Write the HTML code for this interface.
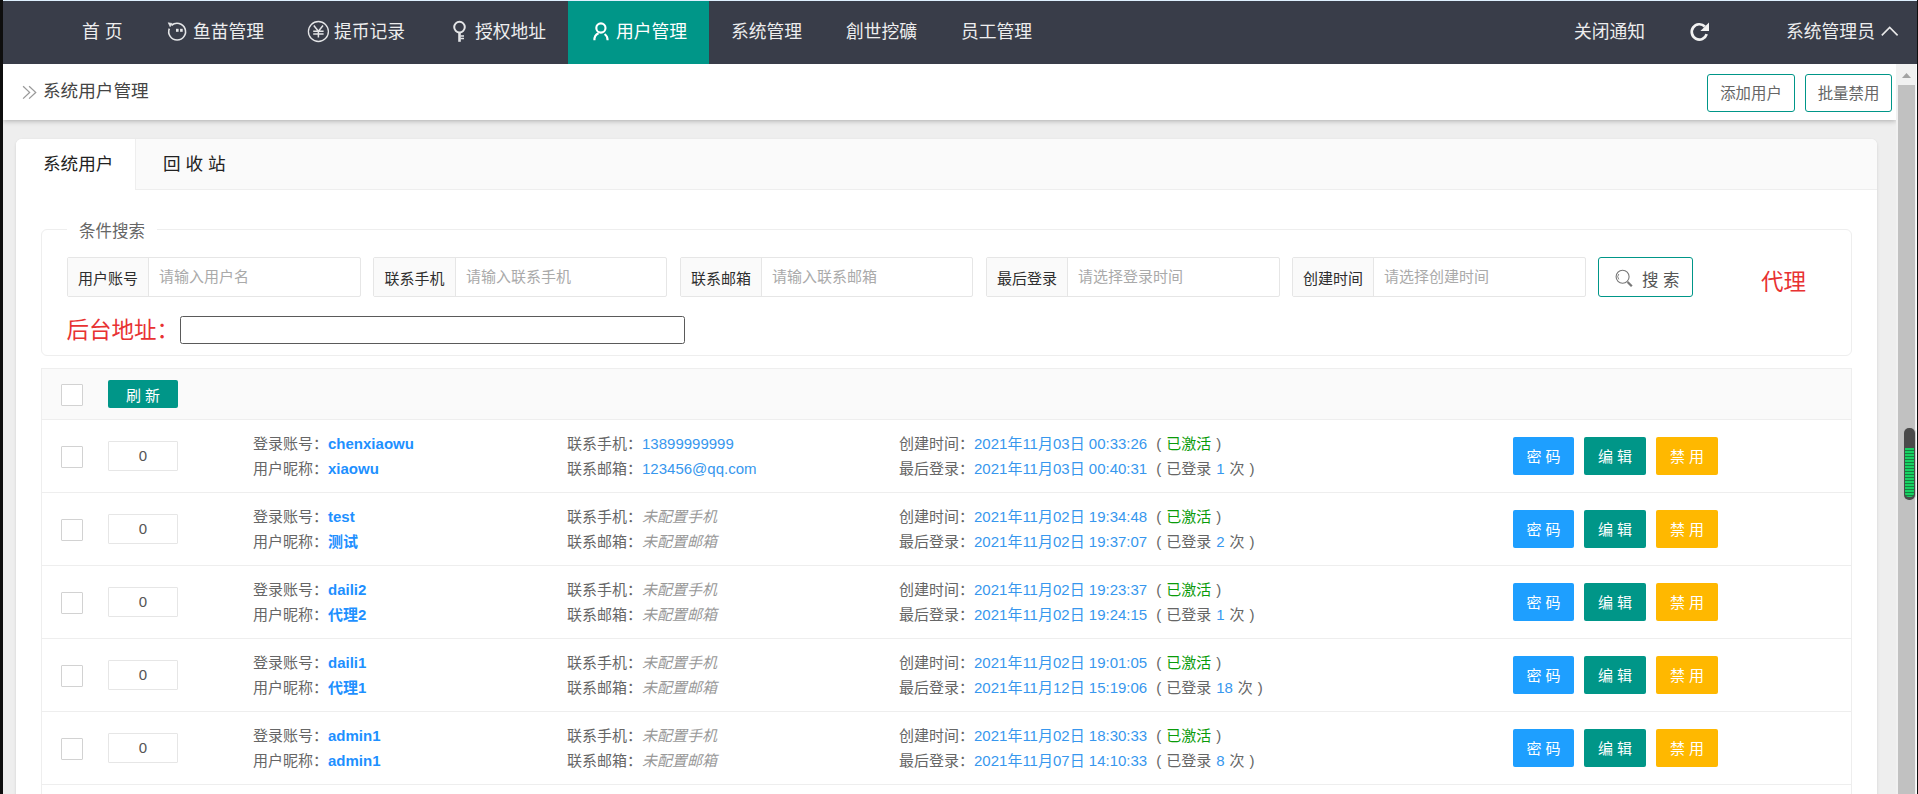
<!DOCTYPE html>
<html lang="zh-CN">
<head>
<meta charset="utf-8">
<title>系统用户管理</title>
<style>
*{box-sizing:border-box;margin:0;padding:0}
html,body{width:1918px;height:794px;overflow:hidden;background:#eee}
body{position:relative;font-family:"Liberation Sans","Noto Sans CJK SC",sans-serif;font-size:15.4px;color:#333}
.abs{position:absolute}
#edgeL{left:0;top:0;width:3px;height:794px;background:#0e0e0e;z-index:50}
#edgeR{left:1917px;top:0;width:1px;height:794px;background:#0e0e0e;z-index:50}
#topline{left:3px;top:0;width:1914px;height:1px;background:#dff1ff;z-index:49}
#header{left:0;top:0;width:1918px;height:64px;background:#393d49;z-index:10}
#header .it{position:absolute;top:1px;height:63px;line-height:63px;font-size:17.8px;color:#ededee;white-space:nowrap}
#header .act{position:absolute;left:568px;top:1px;width:141px;height:63px;background:#009688}
#crumb{left:3px;top:64px;width:1893px;height:56px;background:#fff;box-shadow:0 1px 5px rgba(0,0,0,.28);z-index:5}
#crumb .t{position:absolute;left:40px;top:0;line-height:55px;font-size:17.6px;color:#444}
.obtn{position:absolute;top:10px;height:38px;border:1px solid #009688;border-radius:3px;background:#fff;color:#666;font-size:15.4px;line-height:38px;text-align:center}
#sbar{left:1896px;top:64px;width:21px;height:730px;background:#f1f1f1;border-right:1px solid #fbfbfb;z-index:6}
#sbar .th{position:absolute;left:2px;top:21px;width:17px;height:709px;background:#c1c1c1}
#sbar .up{position:absolute;left:6px;top:9px;width:9px;height:5px;background:#a3a3a3;clip-path:polygon(50% 0,100% 100%,0 100%)}
#card{left:16px;top:139px;width:1861px;height:700px;background:#fff;border-radius:6px 6px 0 0;box-shadow:0 1px 3px rgba(0,0,0,.12)}
#tabs{left:0;top:0;width:1861px;height:51px;background:#fafafa;border-bottom:1px solid #eee;border-radius:6px 6px 0 0}
#tabs .on{position:absolute;left:0;top:0;width:120px;height:51px;background:#fff;border-right:1px solid #eee;box-shadow:0 1px 0 #fff;border-radius:6px 0 0 0}
#tabs span{position:absolute;top:0;line-height:51px;font-size:17.6px;color:#222}
#fs{left:25px;top:90px;width:1811px;height:127px;border:1px solid #eee;border-radius:6px}
#fs .lg{position:absolute;left:25px;top:-12.5px;padding:0 12px;background:#fff;font-size:16.5px;color:#666;line-height:26px}
.grp{position:absolute;top:27px;width:294px;height:40px;border:1px solid #e6e6e6;border-radius:2px;background:#fff}
.grp b{position:absolute;left:0;top:0;width:81px;height:38px;background:#fafafa;border-right:1px solid #e6e6e6;font-weight:normal;font-size:15px;line-height:42px;text-align:center;color:#2e2e2e}
.grp i{position:absolute;left:91px;top:0;font-style:normal;line-height:37px;color:#aaa;font-size:15px}

#sbtn{position:absolute;left:1556px;top:27px;width:95px;height:40px;border:1px solid #009688;border-radius:3px;background:#fff;color:#555;font-size:16.5px;line-height:44px}
#sbtn span{position:absolute;left:43px;top:0}
#agent{position:absolute;left:1719px;top:37.5px;font-size:22.5px;line-height:30px;color:#e83232}
#bk{position:absolute;left:24.5px;top:86px;font-size:22.5px;line-height:30px;color:#e83232}
#bkin{position:absolute;left:138px;top:86px;width:505px;height:28px;border:1px solid #5a5a5a;border-radius:2.5px;background:#fff}
#tb{left:25px;top:229px;width:1811px;height:500px;border:1px solid #eee;border-bottom:0}
#tb .hd{position:absolute;left:0;top:0;width:1809px;height:51px;background:#fafafa;border-bottom:1px solid #eee}
.ck{position:absolute;left:19px;width:22px;height:22px;border:1px solid #d2d2d2;border-radius:1px;background:#fff}
#rf{position:absolute;left:66px;top:11px;width:70px;height:28px;background:#009688;border-radius:2px;color:#fff;font-size:15px;line-height:31px;text-align:center}
.row{position:absolute;left:0;width:1809px;height:73px;border-bottom:1px solid #eee}
.row .ck{top:26px}
.num{position:absolute;left:66px;top:21px;width:70px;height:30px;border:1px solid #e6e6e6;border-radius:1px;text-align:center;line-height:27px;color:#555;font-size:15px}
.col{position:absolute;top:12px;line-height:24.64px;font-size:15px;color:#666;white-space:nowrap}
.col a{color:#3797ee}
.col a.b{color:#1e90ff;font-weight:bold}
.col .st{margin-left:9px;word-spacing:0.8px}
.col em{color:#999;font-style:italic}
.col .g{color:#0a9b0a}
.btn{position:absolute;top:17px;width:62px;height:38px;border-radius:2px;color:#fff;font-size:15px;line-height:40px;text-align:center}
.b1{left:1471px;width:61px;background:#1e9fff}.b2{left:1542px;background:#009688}.b3{left:1614px;background:#ffb800}
#meter{left:1904px;top:428px;width:11px;height:72px;background:#4a4a4a;border-radius:5px;z-index:20;box-shadow:0 0 0 1px rgba(190,190,190,.8)}
#meter div{position:absolute;left:1px;top:20px;width:9px;height:49px;border-radius:0 0 4px 4px;background:repeating-linear-gradient(#17d163 0,#17d163 2px,#14803f 2px,#14803f 3px)}
</style>
</head>
<body>
<div id="edgeL" class="abs"></div><div id="edgeR" class="abs"></div><div id="topline" class="abs"></div>
<div id="header" class="abs">
  <div class="act"></div>

  <svg class="abs" style="left:160px;top:14px" width="40" height="36" viewBox="160 14 40 36" fill="none" stroke="#e4e5e7" stroke-width="1.6">
    <path d="M171.5 25.4 A8.4 8.4 0 1 1 169.3 28.6"/><path d="M168.2 22.7 L172.2 23.5 L170.1 26.8 Z" fill="#e4e5e7" stroke-width="0.6"/>
    <rect x="176" y="28.8" width="2.6" height="3" fill="#e4e5e7" stroke="none"/><rect x="180.1" y="28.8" width="2.6" height="3" fill="#e4e5e7" stroke="none"/>
  </svg>
  <svg class="abs" style="left:300px;top:14px" width="40" height="36" viewBox="300 14 40 36" fill="none" stroke="#e4e5e7" stroke-width="1.3">
    <circle cx="318.4" cy="31.5" r="10"/><path d="M313.8 25.6 L318.4 31.2 L323 25.6 M318.4 31.2 V37.6 M313.2 31.2 H323.6 M313.2 34 H323.6" stroke-width="1.5"/>
  </svg>
  <svg class="abs" style="left:440px;top:14px" width="40" height="36" viewBox="440 14 40 36" fill="none" stroke="#e4e5e7" stroke-width="2">
    <circle cx="459.5" cy="27.1" r="5.3"/><path d="M459.5 32.6 V41.8" stroke-width="2.6"/><path d="M460.5 36 H464 M460.5 38.5 H464" stroke-width="1.4"/>
  </svg>
  <svg class="abs" style="left:580px;top:14px" width="40" height="36" viewBox="580 14 40 36" fill="none" stroke="#fff" stroke-width="2.1">
    <circle cx="600.9" cy="28" r="4.6"/><path d="M594.4 40.2 A6.6 7.2 0 0 1 598.6 33.2"/><path d="M604.6 34 A6.6 7.2 0 0 1 607.6 40.2"/>
  </svg>
  <svg class="abs" style="left:1680px;top:14px" width="40" height="36" viewBox="1680 14 40 36" fill="none" stroke="#f2f2f2" stroke-width="2.7">
    <path d="M1704.84 26.5 A7.65 7.65 0 1 0 1706.7 34.2"/><path d="M1709 22.6 V31 H1700.4 Z" fill="#f2f2f2" stroke="none"/>
  </svg>
  <svg class="abs" style="left:1870px;top:14px" width="40" height="36" viewBox="1870 14 40 36" fill="none" stroke="#e8e8e8" stroke-width="1.6">
    <path d="M1881.8 35.4 L1889.7 27.4 L1897.6 35.4"/>
  </svg>
  <div class="it" style="left:82px">首 页</div>
  <div class="it" style="left:193px">鱼苗管理</div>
  <div class="it" style="left:334px">提币记录</div>
  <div class="it" style="left:475px">授权地址</div>
  <div class="it" style="left:616px;color:#fff">用户管理</div>
  <div class="it" style="left:731px">系统管理</div>
  <div class="it" style="left:846px">創世挖礦</div>
  <div class="it" style="left:961px">员工管理</div>
  <div class="it" style="left:1574px">关闭通知</div>
  <div class="it" style="left:1786px">系统管理员</div>
</div>
<div id="crumb" class="abs">
  <svg class="abs" style="left:16px;top:18px" width="20" height="20" viewBox="19 82 20 20" fill="none" stroke="#999" stroke-width="1.3"><path d="M23.1 86.2 L29.6 92.4 L23.1 98.6 M29.1 86.2 L35.7 92.4 L29.1 98.6"/></svg><div class="t">系统用户管理</div>
  <div class="obtn" style="left:1704px;width:88px">添加用户</div>
  <div class="obtn" style="left:1802px;width:87px">批量禁用</div>
</div>
<div id="sbar" class="abs"><div class="up"></div><div class="th"></div></div>
<div id="meter" class="abs"><div></div></div>
<div id="card" class="abs">
  <div id="tabs" class="abs"><div class="on"></div><span style="left:27px">系统用户</span><span style="left:147px">回 收 站</span></div>
  <div id="fs" class="abs">
    <div class="lg">条件搜索</div>
<div class="grp" style="left:25px"><b>用户账号</b><i>请输入用户名</i></div>
<div class="grp" style="left:331px"><b style="width:82px">联系手机</b><i style="left:92px">请输入联系手机</i></div>
<div class="grp" style="left:638px;width:293px"><b>联系邮箱</b><i>请输入联系邮箱</i></div>
<div class="grp" style="left:944px"><b>最后登录</b><i>请选择登录时间</i></div>
<div class="grp" style="left:1250px"><b>创建时间</b><i>请选择创建时间</i></div>
<div id="sbtn"><svg class="abs" style="left:12px;top:8px" width="24" height="24" viewBox="1611 266 24 24" fill="none" stroke="#777" stroke-width="1.1"><circle cx="1622.6" cy="276.8" r="6.5"/><path d="M1618.8 274 A4.2 4.2 0 0 0 1618.8 279.4" stroke-width="0.9"/><path d="M1627.6 282 L1631.8 286.2" stroke-width="2.3"/></svg><span>搜 索</span></div>
<div id="agent">代理</div>
<div id="bk">后台地址：</div><div id="bkin"></div>
  </div>
<div id="tb" class="abs">
<div class="hd"><div class="ck" style="top:15px"></div><div id="rf">刷 新</div></div>
<div class="row" style="top:51px"><div class="ck"></div><div class="num">0</div>
<div class="col" style="left:211px">登录账号：<a class="b v">chenxiaowu</a><br>用户昵称：<a class="b v">xiaowu</a></div>
<div class="col" style="left:525px">联系手机：<span class="v"><a>13899999999</a></span><br>联系邮箱：<span class="v"><a>123456@qq.com</a></span></div>
<div class="col" style="left:857px">创建时间：<a class="v">2021年11月03日 00:33:26</a><span class="st">( <span class="g">已激活</span> )</span><br>最后登录：<a class="v">2021年11月03日 00:40:31</a><span class="st">( 已登录 <a>1</a> 次 )</span></div>
<div class="btn b1">密 码</div><div class="btn b2">编 辑</div><div class="btn b3">禁 用</div></div>
<div class="row" style="top:124px"><div class="ck"></div><div class="num">0</div>
<div class="col" style="left:211px">登录账号：<a class="b v">test</a><br>用户昵称：<a class="b v">测试</a></div>
<div class="col" style="left:525px">联系手机：<span class="v"><em>未配置手机</em></span><br>联系邮箱：<span class="v"><em>未配置邮箱</em></span></div>
<div class="col" style="left:857px">创建时间：<a class="v">2021年11月02日 19:34:48</a><span class="st">( <span class="g">已激活</span> )</span><br>最后登录：<a class="v">2021年11月02日 19:37:07</a><span class="st">( 已登录 <a>2</a> 次 )</span></div>
<div class="btn b1">密 码</div><div class="btn b2">编 辑</div><div class="btn b3">禁 用</div></div>
<div class="row" style="top:197px"><div class="ck"></div><div class="num">0</div>
<div class="col" style="left:211px">登录账号：<a class="b v">daili2</a><br>用户昵称：<a class="b v">代理2</a></div>
<div class="col" style="left:525px">联系手机：<span class="v"><em>未配置手机</em></span><br>联系邮箱：<span class="v"><em>未配置邮箱</em></span></div>
<div class="col" style="left:857px">创建时间：<a class="v">2021年11月02日 19:23:37</a><span class="st">( <span class="g">已激活</span> )</span><br>最后登录：<a class="v">2021年11月02日 19:24:15</a><span class="st">( 已登录 <a>1</a> 次 )</span></div>
<div class="btn b1">密 码</div><div class="btn b2">编 辑</div><div class="btn b3">禁 用</div></div>
<div class="row" style="top:270px"><div class="ck"></div><div class="num">0</div>
<div class="col" style="left:211px">登录账号：<a class="b v">daili1</a><br>用户昵称：<a class="b v">代理1</a></div>
<div class="col" style="left:525px">联系手机：<span class="v"><em>未配置手机</em></span><br>联系邮箱：<span class="v"><em>未配置邮箱</em></span></div>
<div class="col" style="left:857px">创建时间：<a class="v">2021年11月02日 19:01:05</a><span class="st">( <span class="g">已激活</span> )</span><br>最后登录：<a class="v">2021年11月12日 15:19:06</a><span class="st">( 已登录 <a>18</a> 次 )</span></div>
<div class="btn b1">密 码</div><div class="btn b2">编 辑</div><div class="btn b3">禁 用</div></div>
<div class="row" style="top:343px"><div class="ck"></div><div class="num">0</div>
<div class="col" style="left:211px">登录账号：<a class="b v">admin1</a><br>用户昵称：<a class="b v">admin1</a></div>
<div class="col" style="left:525px">联系手机：<span class="v"><em>未配置手机</em></span><br>联系邮箱：<span class="v"><em>未配置邮箱</em></span></div>
<div class="col" style="left:857px">创建时间：<a class="v">2021年11月02日 18:30:33</a><span class="st">( <span class="g">已激活</span> )</span><br>最后登录：<a class="v">2021年11月07日 14:10:33</a><span class="st">( 已登录 <a>8</a> 次 )</span></div>
<div class="btn b1">密 码</div><div class="btn b2">编 辑</div><div class="btn b3">禁 用</div></div>
<div class="row" style="top:416px"></div>
</div>
</div>
</body>
</html>
